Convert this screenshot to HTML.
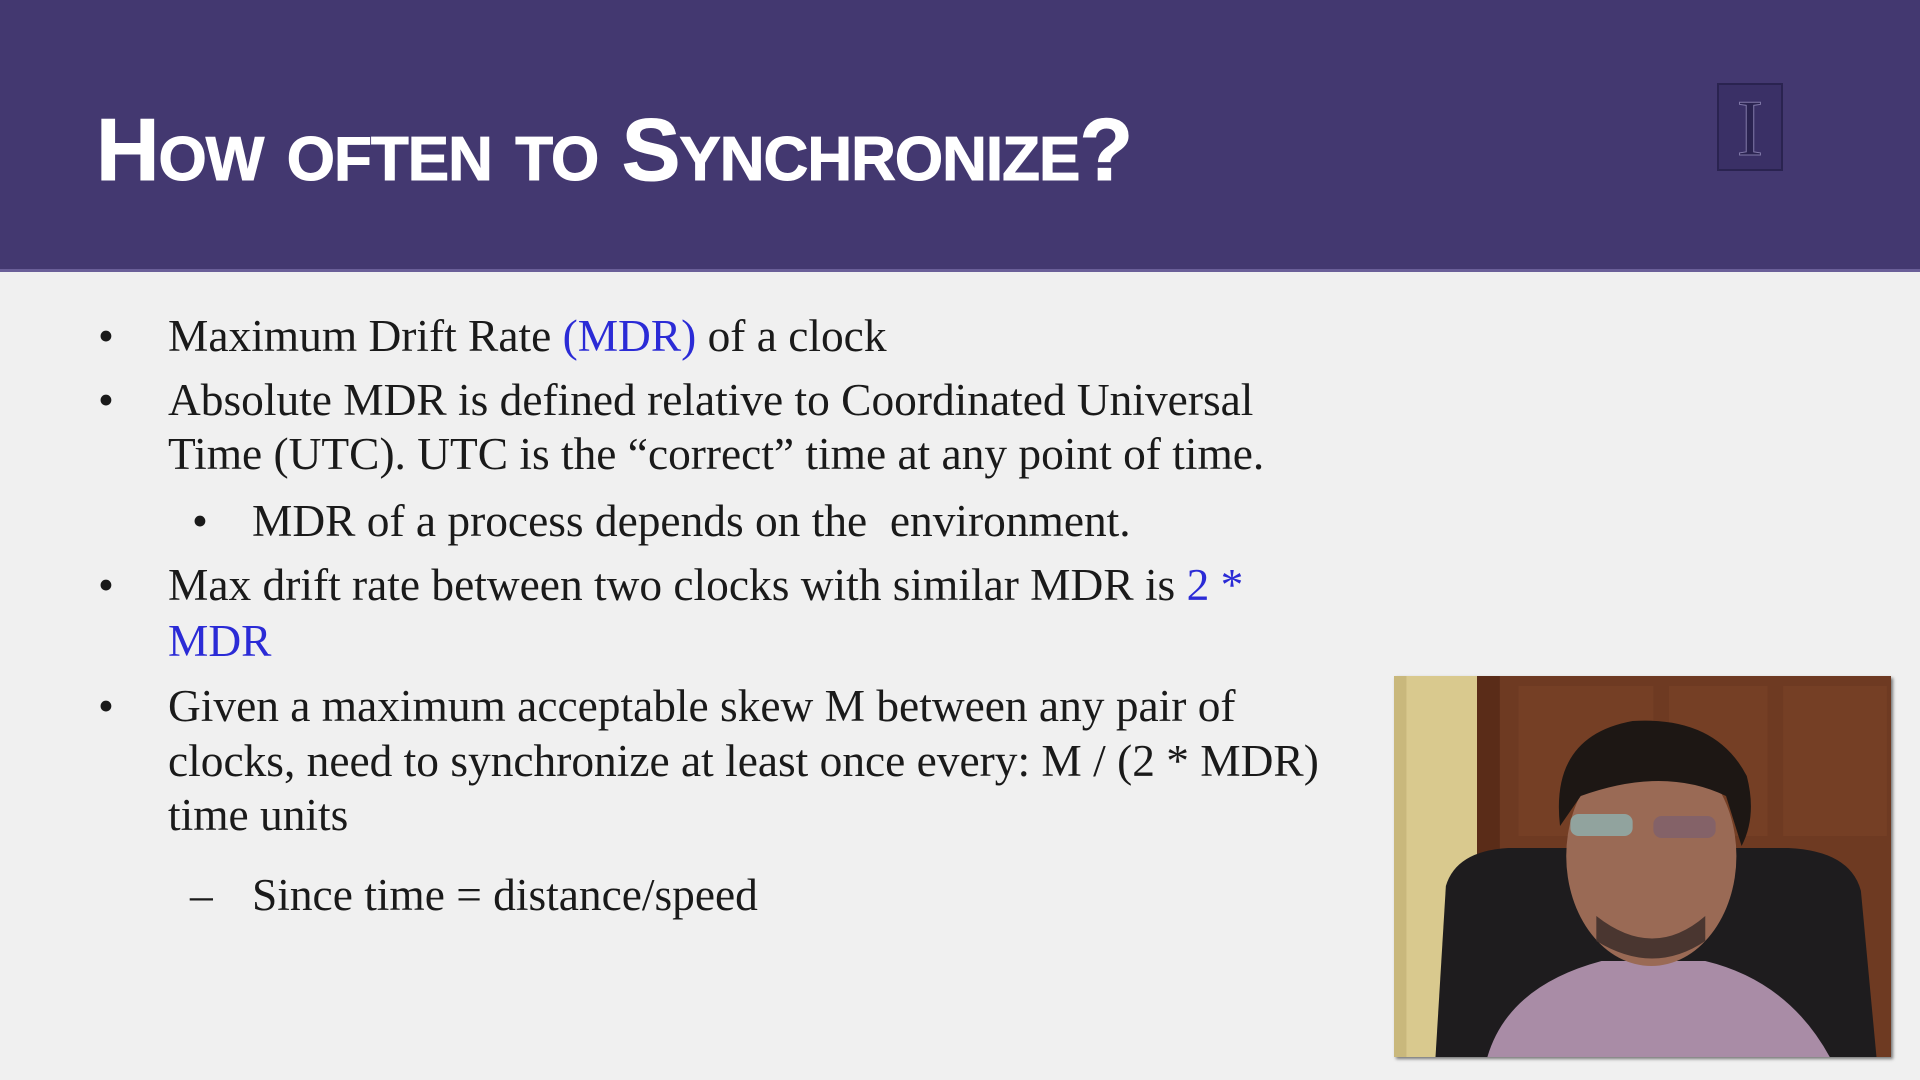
<!DOCTYPE html>
<html><head><meta charset="utf-8"><style>
html,body{margin:0;padding:0}
body{width:1920px;height:1080px;background:#f0f0f0;position:relative;overflow:hidden;font-family:"Liberation Serif",serif}
.hdr{position:absolute;left:0;top:0;width:1920px;height:269px;background:#433870;border-bottom:3px solid #6a5f98}
.title{position:absolute;left:96px;top:106px;font-family:"Liberation Sans",sans-serif;font-weight:bold;font-size:88px;color:#fff;font-variant:small-caps;letter-spacing:-1px;line-height:1;transform:scaleX(1.0);transform-origin:left;-webkit-text-stroke:1px #fff}
.logo{position:absolute;left:1717px;top:83px;width:62px;height:84px;border:2px solid #2a2350;background:#3a3066}
.logo span{position:absolute;left:0;right:0;top:4px;text-align:center;font-family:"Liberation Serif",serif;font-size:80px;color:#2a2350;line-height:1;-webkit-text-stroke:1px #8078a8}
.l{position:absolute;font-size:45.4px;line-height:1;color:#1a1a1a;white-space:nowrap}
.b{color:#2b2bd6}
.vid{position:absolute;left:1394px;top:676px;width:497px;height:381px;overflow:hidden;background:#6b3a22;box-shadow:2px 2px 3px #777}
</style></head><body>
<div class="hdr"></div>
<div class="title">How often to Synchronize?</div>
<div class="logo"><span>I</span></div>

<div class="l" style="left:98px;top:314px">•</div>
<div class="l" style="left:168px;top:314px">Maximum Drift Rate <span class="b">(MDR)</span> of a clock</div>
<div class="l" style="left:98px;top:378px">•</div>
<div class="l" style="left:168px;top:378px">Absolute MDR is defined relative to Coordinated Universal</div>
<div class="l" style="left:168px;top:432px">Time (UTC). UTC is the “correct” time at any point of time.</div>
<div class="l" style="left:192px;top:499px">•</div>
<div class="l" style="left:252px;top:499px">MDR of a process depends on the &nbsp;environment.</div>
<div class="l" style="left:98px;top:563px">•</div>
<div class="l" style="left:168px;top:563px">Max drift rate between two clocks with similar MDR is <span class="b">2 *</span></div>
<div class="l b" style="left:168px;top:619px">MDR</div>
<div class="l" style="left:98px;top:684px">•</div>
<div class="l" style="left:168px;top:684px">Given a maximum acceptable skew M between any pair of</div>
<div class="l" style="left:168px;top:739px">clocks, need to synchronize at least once every: M / (2 * MDR)</div>
<div class="l" style="left:168px;top:793px">time units</div>
<div class="l" style="left:190px;top:873px">–</div>
<div class="l" style="left:252px;top:873px">Since time = distance/speed</div>

<div class="vid">
<svg width="497" height="381" viewBox="0 0 479 381" preserveAspectRatio="none">
<rect width="479" height="381" fill="#6e3a22"/>
<rect x="0" y="0" width="80" height="381" fill="#d9c98e"/>
<rect x="0" y="0" width="12" height="381" fill="#c9b87c"/>
<rect x="80" y="0" width="22" height="381" fill="#5a2c18"/>
<rect x="120" y="10" width="130" height="150" fill="#7a4228" opacity="0.6"/>
<rect x="265" y="10" width="95" height="150" fill="#7a4228" opacity="0.6"/>
<rect x="375" y="10" width="100" height="150" fill="#7a4228" opacity="0.6"/>
<path d="M40 381 L50 210 Q60 175 110 172 L380 172 Q440 175 450 215 L465 381 Z" fill="#1e1c1e"/>
<path d="M90 381 Q110 310 200 285 L300 285 Q380 305 420 381 Z" fill="#a98ca6"/>
<ellipse cx="248" cy="180" rx="82" ry="110" fill="#9a6a55"/>
<path d="M160 150 Q150 60 230 45 Q310 40 340 100 Q350 140 335 170 L320 120 Q260 90 180 120 Z" fill="#1d1714"/>
<path d="M195 240 Q250 285 300 240 L300 265 Q250 300 195 265 Z" fill="#4a3630"/>
<rect x="170" y="138" width="60" height="22" rx="8" fill="#8fb2b0" opacity="0.8"/>
<rect x="250" y="140" width="60" height="22" rx="8" fill="#7a6070" opacity="0.7"/>
</svg>
</div>
</body></html>
